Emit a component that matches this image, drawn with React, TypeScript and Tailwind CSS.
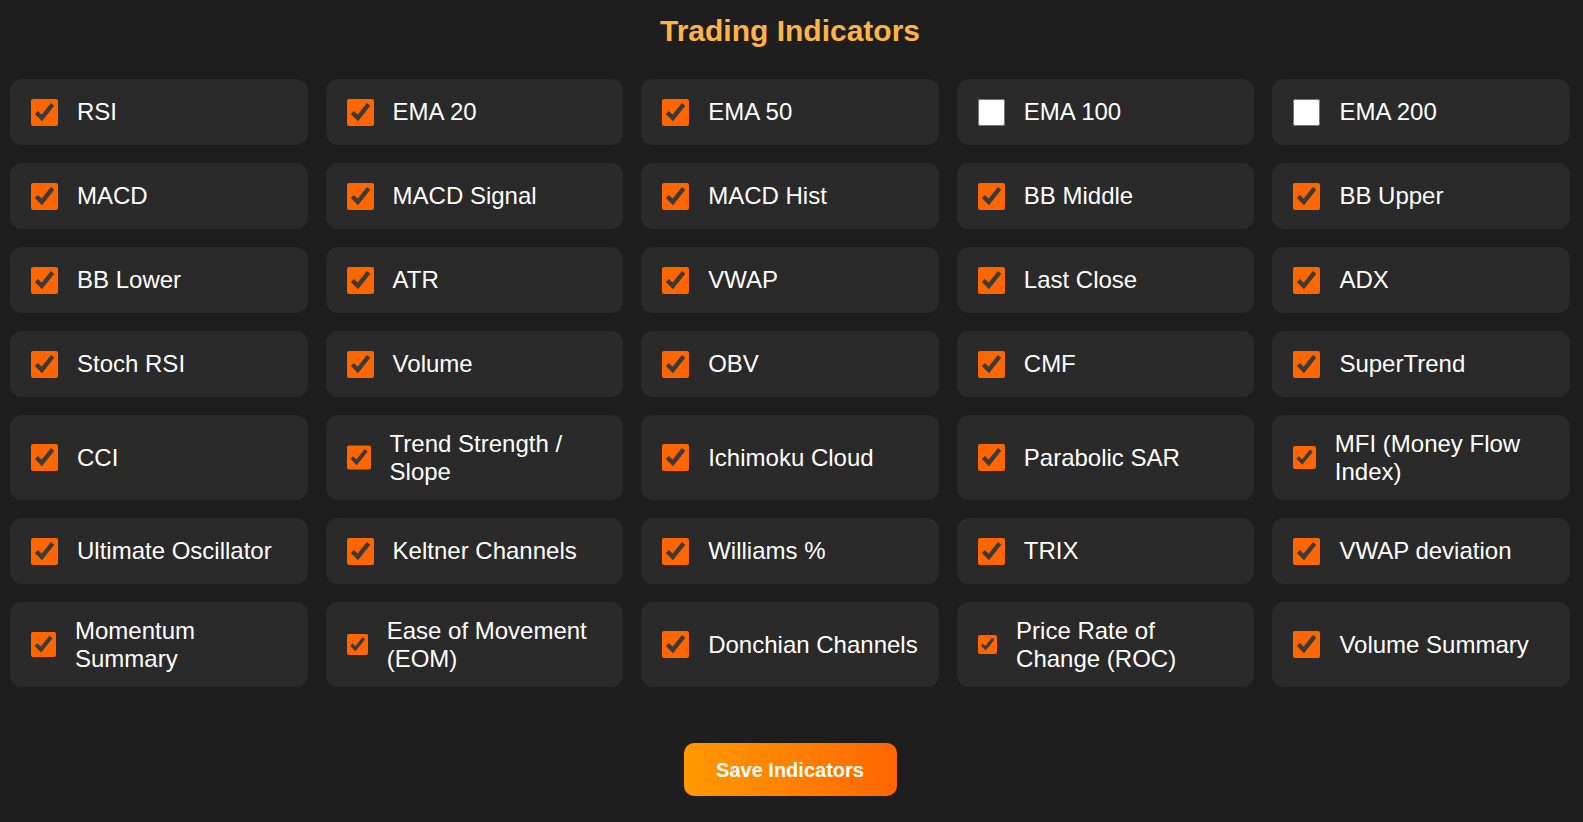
import { useState } from "react";

const INDICATORS = [
  "RSI",
  "EMA 20",
  "EMA 50",
  "EMA 100",
  "EMA 200",
  "MACD",
  "MACD Signal",
  "MACD Hist",
  "BB Middle",
  "BB Upper",
  "BB Lower",
  "ATR",
  "VWAP",
  "Last Close",
  "ADX",
  "Stoch RSI",
  "Volume",
  "OBV",
  "CMF",
  "SuperTrend",
  "CCI",
  "Trend Strength / Slope",
  "Ichimoku Cloud",
  "Parabolic SAR",
  "MFI (Money Flow Index)",
  "Ultimate Oscillator",
  "Keltner Channels",
  "Williams %",
  "TRIX",
  "VWAP deviation",
  "Momentum Summary",
  "Ease of Movement (EOM)",
  "Donchian Channels",
  "Price Rate of Change (ROC)",
  "Volume Summary",
];

const OFF_BY_DEFAULT = ["EMA 100", "EMA 200"];

const App = () => {
  const [enabled, setEnabled] = useState<Record<string, boolean>>(() =>
    Object.fromEntries(INDICATORS.map((name) => [name, !OFF_BY_DEFAULT.includes(name)]))
  );

  const toggle = (name: string) => {
    setEnabled((prev) => ({ ...prev, [name]: !prev[name] }));
  };

  const save = () => {
    console.log("Saving indicators", enabled);
  };

  return (
    <div className="min-h-screen bg-[#1e1e1e] pl-[10px] pr-[13px] pt-[14px] pb-[26px] font-['Liberation_Sans',Arial,sans-serif] text-white">
      <h2 className="text-center text-[30px] leading-[34px] font-bold text-[#ffb347]">
        Trading Indicators
      </h2>

      <div className="mt-[31px] grid grid-cols-5 gap-[18px]">
        {INDICATORS.map((name) => (
          <label
            key={name}
            className="flex min-h-[66px] cursor-pointer items-center gap-[19px] rounded-[12px] bg-[#2a2a2a] py-[15px] pl-[21px] pr-[20px] text-[24px] leading-[27.5px]"
          >
            <input
              type="checkbox"
              checked={enabled[name]}
              onChange={() => toggle(name)}
              className="h-[27px] w-[27px] min-w-0 cursor-pointer accent-[#ff6600]"
            />
            <span>{name}</span>
          </label>
        ))}
      </div>

      <div className="mt-[56px] flex justify-center">
        <button
          onClick={save}
          className="h-[53px] w-[213px] rounded-[10px] bg-gradient-to-r from-[#ff9900] to-[#ff6600] text-[20px] font-bold text-white"
        >
          Save Indicators
        </button>
      </div>
    </div>
  );
};

export default App;
